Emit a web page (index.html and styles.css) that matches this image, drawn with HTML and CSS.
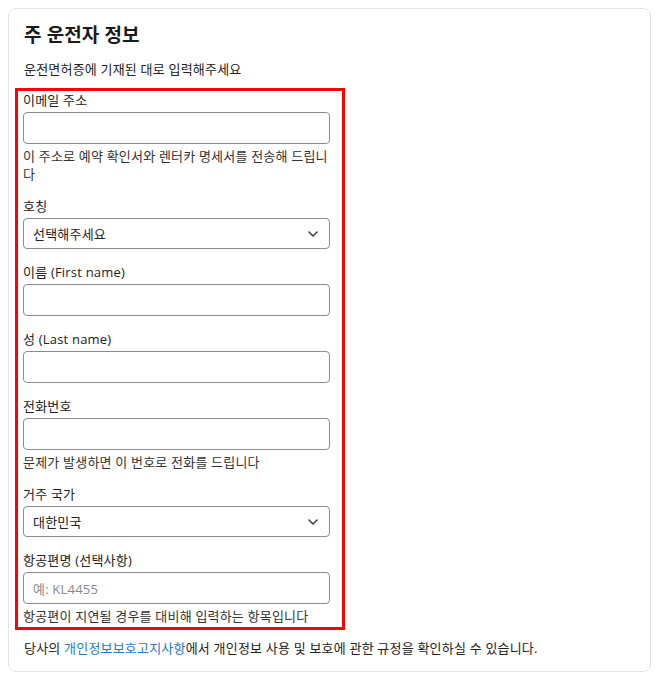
FILE: index.html
```html
<!DOCTYPE html>
<html lang="ko">
<head>
<meta charset="utf-8">
<title>주 운전자 정보</title>
<link rel="stylesheet" href="styles.css">
</head>
<body>
<section class="card">
  <h2 class="title">주 운전자 정보</h2>
  <p class="subtitle">운전면허증에 기재된 대로 입력해주세요</p>
  <div class="form">
    <div class="group">
      <label class="label">이메일 주소</label>
      <div class="field"></div>
      <p class="help">이 주소로 예약 확인서와 렌터카 명세서를 전송해 드립니다</p>
    </div>
    <div class="group">
      <label class="label">호칭</label>
      <div class="field select"><span class="value">선택해주세요</span>
        <svg class="chev" width="10" height="6" viewBox="0 0 10 6"><path d="M1 1l4 4 4-4" fill="none" stroke="#333" stroke-width="1.4" stroke-linecap="round" stroke-linejoin="round"/></svg>
      </div>
    </div>
    <div class="group">
      <label class="label">이름 (First name)</label>
      <div class="field"></div>
    </div>
    <div class="group">
      <label class="label">성 (Last name)</label>
      <div class="field"></div>
    </div>
    <div class="group">
      <label class="label">전화번호</label>
      <div class="field"></div>
      <p class="help">문제가 발생하면 이 번호로 전화를 드립니다</p>
    </div>
    <div class="group">
      <label class="label">거주 국가</label>
      <div class="field select"><span class="value">대한민국</span>
        <svg class="chev" width="10" height="6" viewBox="0 0 10 6"><path d="M1 1l4 4 4-4" fill="none" stroke="#333" stroke-width="1.4" stroke-linecap="round" stroke-linejoin="round"/></svg>
      </div>
    </div>
    <div class="group">
      <label class="label">항공편명 (선택사항)</label>
      <div class="field"><span class="placeholder">예: KL4455</span></div>
      <p class="help">항공편이 지연될 경우를 대비해 입력하는 항목입니다</p>
    </div>
  </div>
  <p class="footer">당사의 <a class="link" href="#">개인정보보호고지사항</a>에서 개인정보 사용 및 보호에 관한 규정을 확인하실 수 있습니다.</p>
</section>
</body>
</html>
```
FILE: styles.css
```css
html, body {
  margin: 0;
  padding: 0;
  background: #ffffff;
}
body {
  padding: 8px;
  font-family: "Open Sans", "Noto Sans CJK KR", sans-serif;
  color: #222;
}
.card {
  border: 1px solid #e4e4e4;
  border-radius: 8px;
  padding: 13px 16px 13px 15px;
  height: 664px;
  box-sizing: border-box;
}
.title {
  margin: 0 0 14px 0;
  font-family: "Noto Sans CJK KR", sans-serif;
  font-size: 19px;
  line-height: 24px;
  font-weight: 700;
  color: #1a1a1a;
}
.subtitle {
  margin: 0 0 11px 0;
  font-size: 13px;
  letter-spacing: 0.2px;
  line-height: 18px;
  color: #222;
}
.form {
  margin-left: -9px;
  width: 330px;
  box-sizing: border-box;
  border: 3px solid #ff0000;
  padding: 0 12px 2px 5px;
  display: flex;
  flex-direction: column;
  gap: 14px;
  margin-top: -1px;
}
.group {
  display: flex;
  flex-direction: column;
}
.label {
  font-size: 13px;
  letter-spacing: 0.2px;
  line-height: 18px;
  margin-bottom: 3px;
  color: #222;
}
.field {
  height: 32px;
  box-sizing: border-box;
  border: 1px solid #8c8c8c;
  border-radius: 4px;
  display: flex;
  align-items: center;
  padding: 0 11px 0 9px;
}
.select {
  height: 31px;
  justify-content: space-between;
}
.value {
  font-size: 13px;
  letter-spacing: 0.2px;
  color: #222;
}
.placeholder {
  font-size: 13px;
  letter-spacing: 0.2px;
  color: #8a8a8a;
}
.chev {
  display: block;
}
.help {
  margin: 3px 0 0 0;
  font-size: 13px;
  letter-spacing: 0.2px;
  line-height: 18px;
  color: #333;
  word-break: break-all;
}
.footer {
  margin: 9px 0 0 0;
  font-size: 13px;
  letter-spacing: 0.2px;
  line-height: 18px;
  color: #222;
}
.link {
  color: #1f78c8;
  text-decoration: none;
}
```
